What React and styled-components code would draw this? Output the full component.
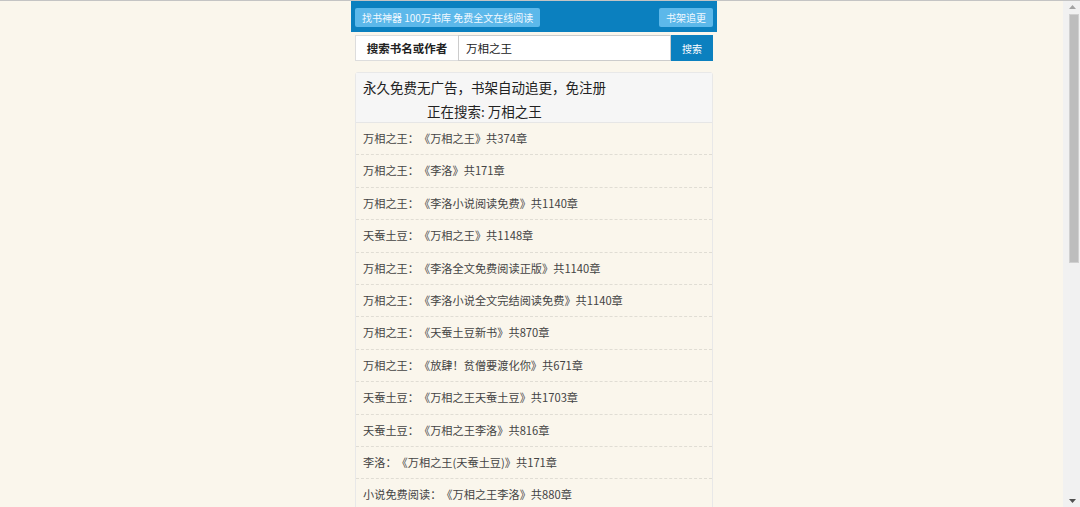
import React from 'react';
import styled, { createGlobalStyle } from 'styled-components';

const GlobalStyle = createGlobalStyle`
  html, body {
    margin: 0;
    padding: 0;
    height: 100%;
    overflow: hidden;
    background: #faf6ec;
  }
  body {
    font-family: "Noto Sans CJK SC", "Liberation Sans", sans-serif;
    color: #333;
    text-spacing-trim: space-all;
  }
`

const Shell = styled.div`
  height: 100vh;
  box-sizing: border-box;
  border-top: 1px solid #c4c4c4;
  display: flex;
`

const Main = styled.div`
  flex: 1;
  min-width: 0;
  overflow: hidden;
  padding-left: 5px;
`

const ScrollBar = styled.div`
  width: 17px;
  background: #f1f1f1;
  display: flex;
  flex-direction: column;
`

const ArrowButton = styled.div`
  height: 12px;
  display: flex;
  align-items: center;
  justify-content: center;
  padding-left: 1px;
`

const Track = styled.div`
  flex: 1;
  padding: 1px 1px 0 6px;
`

const Thumb = styled.div`
  height: 249px;
  background: #bdbdbd;
  border: 1px solid #d0d0d0;
  box-sizing: border-box;
`

const Wrap = styled.div`
  width: 366px;
  margin: 0 auto;
`

const TopBar = styled.div`
  background: #0b80bf;
  height: 31px;
  padding: 0 4px;
  display: flex;
  align-items: center;
  justify-content: space-between;
`

const TopButton = styled.a`
  display: block;
  background: #5cb8ea;
  color: #f2f9ff;
  font-size: 10px;
  line-height: 19px;
  padding: 0 7px;
  border-radius: 2px;
  text-decoration: none;
  margin-top: 2px;
`

const SearchRow = styled.div`
  display: flex;
  margin: 3px 4px 0;
  height: 26px;
`

const Label = styled.div`
  width: 102px;
  border: 1px solid #ddd;
  border-right: none;
  background: #fff;
  font-size: 11.5px;
  font-weight: bold;
  color: #222;
  display: flex;
  align-items: center;
  justify-content: center;
`

const Input = styled.input`
  flex: 1;
  min-width: 0;
  border: 1px solid #ccc;
  background: #fff;
  font-family: inherit;
  font-size: 11.5px;
  color: #222;
  padding: 0 7px;
  outline: none;
`

const SearchButton = styled.button`
  width: 42px;
  border: none;
  background: #0b80bf;
  color: #fff;
  font-family: inherit;
  font-size: 10px;
  padding: 0;
`

const Panel = styled.div`
  margin: 11px 4px 0;
  border: 1px solid #e8e8e8;
  border-radius: 3px;
`

const PanelHead = styled.div`
  background: #f6f6f6;
  border-bottom: 1px solid #e6e6e6;
  padding: 1px 7px 0;
  font-size: 13.5px;
  color: #222;
`

const HeadLine = styled.div`
  line-height: ${p => p.$h}px;
  padding-left: ${p => p.$indent || 0}px;
`

const Item = styled.div`
  padding: 7px 7px;
  line-height: 17.4px;
  font-size: 11.2px;
  color: #444;
  border-bottom: 1px dashed #e0ddd4;
`

const results = [
  '万相之王：《万相之王》共374章',
  '万相之王：《李洛》共171章',
  '万相之王：《李洛小说阅读免费》共1140章',
  '天蚕土豆：《万相之王》共1148章',
  '万相之王：《李洛全文免费阅读正版》共1140章',
  '万相之王：《李洛小说全文完结阅读免费》共1140章',
  '万相之王：《天蚕土豆新书》共870章',
  '万相之王：《放肆！贫僧要渡化你》共671章',
  '天蚕土豆：《万相之王天蚕土豆》共1703章',
  '天蚕土豆：《万相之王李洛》共816章',
  '李洛：《万相之王(天蚕土豆)》共171章',
  '小说免费阅读：《万相之王李洛》共880章',
  '万相之王：《万相之王笔趣阁》共1140章',
]

export default function App() {
  return (
    <Shell>
      <GlobalStyle />
      <Main>
        <Wrap>
          <TopBar>
            <TopButton href="#">找书神器 100万书库 免费全文在线阅读</TopButton>
            <TopButton href="#">书架追更</TopButton>
          </TopBar>
          <SearchRow>
            <Label>搜索书名或作者</Label>
            <Input defaultValue="万相之王" />
            <SearchButton>搜索</SearchButton>
          </SearchRow>
          <Panel>
            <PanelHead>
              <HeadLine $h={26}>永久免费无广告，书架自动追更，免注册</HeadLine>
              <HeadLine $h={22} $indent={64}>正在搜索: 万相之王</HeadLine>
            </PanelHead>
            {results.map((r, i) => (
              <Item key={i}>{r}</Item>
            ))}
          </Panel>
        </Wrap>
      </Main>
      <ScrollBar>
        <ArrowButton>
          <svg width="7" height="4" viewBox="0 0 7 4"><path d="M0 4h7L3.5 0z" fill="#a3a3a3" /></svg>
        </ArrowButton>
        <Track>
          <Thumb />
        </Track>
        <ArrowButton>
          <svg width="7" height="4" viewBox="0 0 7 4"><path d="M0 0h7L3.5 4z" fill="#505050" /></svg>
        </ArrowButton>
      </ScrollBar>
    </Shell>
  );
}
